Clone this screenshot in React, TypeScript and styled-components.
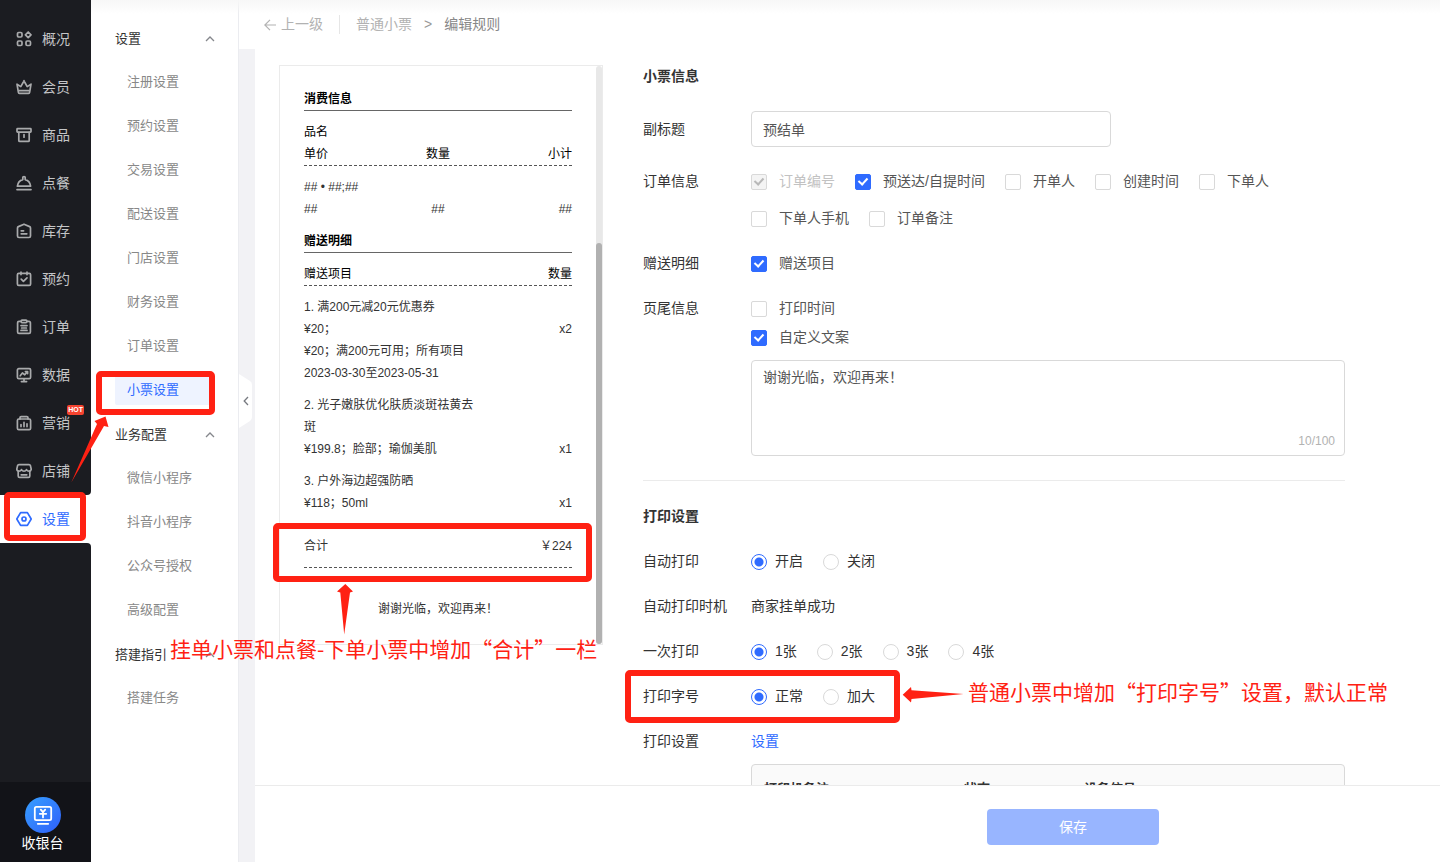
import React from "react";
import styled, { createGlobalStyle, css } from "styled-components";

const blue = "#2f6bff";
const red = "#ff2113";

const GlobalStyle = createGlobalStyle`
  *, *::before, *::after { box-sizing: border-box; }
  body {
    margin: 0;
    background: #fff;
    color: #333;
    font-family: "Liberation Sans", "Noto Sans CJK SC", sans-serif;
    font-size: 14px;
    line-height: 21px;
  }
  a { color: inherit; text-decoration: none; }
  button, input, textarea { font: inherit; color: inherit; }
`;

const Shell = styled.div`
  position: relative;
  display: flex;
  height: 100vh;
  overflow: hidden;
`;

/* ---------- dark navigation rail ---------- */

const Rail = styled.nav`
  display: flex;
  flex-direction: column;
  flex: none;
  width: 91px;
`;

const RailGroup = styled.div`
  padding-top: 15px;
  background: #1b1c21;
  border-bottom-right-radius: 4px;
`;

const RailFill = styled.div`
  flex: 1;
  background: #1b1c21;
  border-top-right-radius: 4px;
`;

const RailLink = styled.a<{ $active?: boolean }>`
  display: flex;
  align-items: center;
  gap: 10px;
  height: 48px;
  padding-left: 16px;
  color: ${(p) => (p.$active ? blue : "#c4c5c7")};
  background: ${(p) => (p.$active ? "#fff" : "transparent")};
`;

const RailIcon = styled.svg<{ $active?: boolean }>`
  width: 16px;
  height: 16px;
  flex: none;
  fill: none;
  stroke: ${(p) => (p.$active ? blue : "#a9aaac")};
  stroke-width: 1.7;
  stroke-linecap: round;
  stroke-linejoin: round;
`;

const RailText = styled.span`
  position: relative;
`;

const HotBadge = styled.span`
  position: absolute;
  top: -8px;
  right: -14px;
  padding: 0 1px;
  border-radius: 2px;
  background: #f5432f;
  color: #fff;
  font: 700 7px/10px "Liberation Sans", sans-serif;
`;

const Cashier = styled.a`
  display: flex;
  flex-direction: column;
  align-items: center;
  height: 80px;
  padding: 15px 6px 0 0;
  background: #121318;
  color: #fff;
`;

/* ---------- second level menu ---------- */

const SubMenu = styled.nav`
  flex: none;
  width: 148px;
  padding: 16px 23px 0 24px;
  border-right: 1px solid #ebecf0;
  font-size: 13px;
`;

const SubHead = styled.button`
  display: flex;
  align-items: center;
  justify-content: space-between;
  width: 100%;
  height: 44px;
  padding: 0;
  border: 0;
  background: none;
  color: #333;
  text-align: left;
`;

const Caret = styled.svg`
  width: 10px;
  height: 10px;
  fill: none;
  stroke: #85878c;
  stroke-width: 1.3;
`;

const SubLink = styled.a<{ $active?: boolean }>`
  display: block;
  height: 30px;
  margin: 7px 0 14px;
  padding-left: 12px;
  border-radius: 2px;
  line-height: 30px;
  color: ${(p) => (p.$active ? blue : "#888")};
  background: ${(p) => (p.$active ? "#eef3ff" : "transparent")};
  &:last-child { margin-bottom: 7px; }
`;

/* ---------- page area ---------- */

const Page = styled.div`
  display: flex;
  flex-direction: column;
  flex: 1;
  min-width: 0;
`;

const TopShade = styled.div`
  position: absolute;
  top: 0;
  left: 91px;
  right: 0;
  height: 14px;
  background: linear-gradient(#f7f7f7, rgba(255, 255, 255, 0));
`;

const Crumbs = styled.nav`
  display: flex;
  align-items: center;
  flex: none;
  height: 49px;
  padding-left: 25px;
  color: #b2b2b2;
`;

const BackLink = styled.a`
  display: flex;
  align-items: center;
  gap: 5px;
  height: 19px;
  padding-right: 16px;
  border-right: 1px solid #e6e6e6;
`;

const CrumbLink = styled.a`
  margin-left: 16px;
`;

const CrumbMark = styled.span`
  margin: 0 12px;
  color: #999;
`;

const CrumbHere = styled.span`
  color: #888;
`;

const Below = styled.div`
  display: flex;
  flex: 1;
  min-height: 0;
`;

const Gutter = styled.div`
  display: flex;
  align-items: center;
  flex: none;
  width: 16px;
  padding-bottom: 109px;
  background: #f2f2f5;
`;

const FoldButton = styled.button`
  width: 13px;
  height: 54px;
  padding: 0;
  border: 0;
  background: none;
  line-height: 0;
`;

const Work = styled.div`
  display: flex;
  flex-direction: column;
  flex: 1;
  min-width: 0;
`;

const Scroller = styled.main`
  display: flex;
  align-items: flex-start;
  gap: 40px;
  flex: 1;
  min-height: 0;
  overflow: hidden;
  padding: 16px 24px 0;
`;

const Footer = styled.footer`
  display: flex;
  align-items: center;
  justify-content: center;
  flex: none;
  height: 77px;
  padding: 6px 0 0 451px;
  border-top: 1px solid #ebebeb;
`;

const SaveButton = styled.button`
  width: 172px;
  height: 36px;
  border: 0;
  border-radius: 4px;
  background: #98b5ff;
  color: #fff;
`;

/* ---------- receipt preview ---------- */

const Receipt = styled.section`
  display: flex;
  flex: none;
  width: 324px;
  border: 1px solid #ebebeb;
  font-size: 12px;
  line-height: 22px;
`;

const Paper = styled.div`
  flex: 1;
  padding: 22px 24px 24px;
`;

const Track = styled.div`
  width: 6px;
  padding-top: 177px;
  border-radius: 3px;
  background: #e8e8e8;
`;

const Thumb = styled.div`
  height: 100%;
  border-radius: 3px;
  background: #b1b1b1;
`;

const PaperTitle = styled.h3`
  margin: 0 0 10px;
  border-bottom: 1px solid #666;
  color: #000;
  font-size: 12px;
  font-weight: 700;
`;

const dashed = css`
  border-bottom: 1px dashed #555;
`;

const PaperHead = styled.div`
  margin-bottom: 10px;
  color: #000;
  ${dashed}
`;

const PaperItem = styled.div`
  margin-bottom: 10px;
`;

const PaperRow = styled.div`
  display: flex;
  justify-content: space-between;
`;

const ItemName = styled.div`
  width: 65%;
`;

const Total = styled(PaperRow)`
  margin-top: 21px;
  padding-bottom: 10px;
  ${dashed}
`;

const Thanks = styled.p`
  margin: 30px 0 0;
  text-align: center;
`;

/* ---------- form ---------- */

const Form = styled.form`
  flex: 0 1 702px;
  min-width: 0;
`;

const SectionTitle = styled.h2`
  margin: 0 0 24px;
  font-size: 14px;
  font-weight: 700;
  line-height: 22px;
`;

const Row = styled.div<{ $center?: boolean }>`
  display: flex;
  align-items: ${(p) => (p.$center ? "center" : "flex-start")};
  margin-bottom: 24px;
`;

const Label = styled.label`
  flex: none;
  width: 108px;
`;

const GroupLabel = styled.span`
  flex: none;
  width: 108px;
`;

const Field = styled.div`
  flex: 1;
  min-width: 0;
`;

const Options = styled.div`
  display: flex;
  flex-wrap: wrap;
  gap: 16px 20px;
`;

const Stack = styled.div`
  display: flex;
  flex-direction: column;
  gap: 8px;
`;

const TextInput = styled.input`
  display: block;
  width: 360px;
  max-width: 100%;
  height: 36px;
  padding: 0 11px;
  border: 1px solid #d9d9d9;
  border-radius: 4px;
  background: #fff;
  color: #555;
`;

const Option = styled.label<{ $radio?: boolean; $disabled?: boolean }>`
  display: flex;
  align-items: center;
  gap: ${(p) => (p.$radio ? 8 : 12)}px;
  color: ${(p) => (p.$disabled ? "#c2c2c2" : p.$radio ? "#333" : "#555")};
`;

const Check = styled.input`
  appearance: none;
  position: relative;
  width: 16px;
  height: 16px;
  margin: 0;
  border: 1px solid #d9d9d9;
  border-radius: 2px;
  background: #fff;
  &:checked {
    border-color: ${blue};
    background: ${blue};
  }
  &:checked::after {
    content: "";
    position: absolute;
    left: 4px;
    top: 1px;
    width: 6px;
    height: 9px;
    border: solid #fff;
    border-width: 0 2px 2px 0;
    transform: rotate(42deg);
  }
  &:disabled {
    border-color: #d9d9d9;
    background: #f4f4f4;
  }
  &:disabled::after {
    border-color: #b8b8b8;
  }
`;

const Radio = styled.input`
  appearance: none;
  width: 16px;
  height: 16px;
  margin: 0;
  border: 1px solid #d9d9d9;
  border-radius: 50%;
  background: #fff;
  &:checked {
    border-color: ${blue};
    background: radial-gradient(circle, ${blue} 4px, #fff 5px);
  }
`;

/* The text box belongs to the row above it, so it sits half a row gap closer. */
const TextBox = styled.div`
  position: relative;
  margin: -12px 0 24px 108px;
`;

const TextArea = styled.textarea`
  display: block;
  width: 100%;
  height: 96px;
  padding: 6px 11px;
  border: 1px solid #d9d9d9;
  border-radius: 4px;
  color: #555;
  resize: none;
`;

const Counter = styled.span`
  position: absolute;
  right: 10px;
  bottom: 4px;
  color: #b2b2b2;
  font-size: 12px;
`;

const Divider = styled.hr`
  height: 1px;
  margin: 0 0 24px;
  border: 0;
  background: #ebebeb;
`;

const TextLink = styled.a`
  color: ${blue};
`;

const TableFrame = styled.div`
  margin: -12px 0 0 108px;
  border: 1px solid #d9d9d9;
  border-radius: 4px;
  background: #fafafa;
  overflow: hidden;
`;

const Table = styled.table`
  width: 100%;
  border-collapse: collapse;
  table-layout: fixed;
  font-size: 13px;
`;

const Th = styled.th<{ $width?: number }>`
  width: ${(p) => (p.$width ? `${p.$width}px` : "auto")};
  height: 46px;
  padding: 0 12px;
  text-align: left;
`;

/* ---------- red mark-up on top of the page ---------- */

const Frame = styled.div<{ $x: number; $y: number; $w: number; $h: number }>`
  position: absolute;
  left: ${(p) => p.$x}px;
  top: ${(p) => p.$y}px;
  width: ${(p) => p.$w}px;
  height: ${(p) => p.$h}px;
  border: 6px solid ${red};
  border-radius: 5px;
  pointer-events: none;
`;

const Arrows = styled.svg`
  position: absolute;
  left: 0;
  top: 0;
  width: 1000px;
  height: 720px;
  fill: ${red};
  pointer-events: none;
`;

const Note = styled.p<{ $x: number; $y: number }>`
  position: absolute;
  left: ${(p) => p.$x}px;
  top: ${(p) => p.$y}px;
  margin: 0;
  color: ${red};
  font: 400 21px/30px "Noto Sans CJK SC", sans-serif;
  white-space: nowrap;
  pointer-events: none;
`;

const icons: Record<string, React.ReactNode> = {
  概况: (
    <>
      <rect x="1.5" y="1.5" width="4.5" height="4.5" rx="1.2" />
      <path d="M12.2 1 15 3.8 12.2 6.6 9.4 3.8z" />
      <rect x="1.5" y="10" width="4.5" height="4.5" rx="1.2" />
      <rect x="10" y="10" width="4.5" height="4.5" rx="1.2" />
    </>
  ),
  会员: (
    <>
      <path d="M1 5.2 2.4 13.4q.1 1 1 1h9.200q.9 0 1-1L15 5.200 11.200 7.600 8.600 3H7.400L4.800 7.600z" />
      <path d="M3 11.600h10M8 1.600v.6" />
    </>
  ),
  商品: (
    <>
      <rect x="1" y="1.6" width="14" height="3.6" rx=".6" />
      <path d="M2.800 5.400v8q0 1 1 1h8.400q1 0 1-1v-8M8 7.600v2.600" />
    </>
  ),
  点餐: (
    <>
      <path d="M1.4 11.2Q2 6 6.8 4.6V2.600q0-1 1.200-1t1.200 1v2Q14 6 14.600 11.200z" />
      <path d="M1 14.600h14" />
    </>
  ),
  库存: (
    <>
      <path d="M8 1.200 13.600 3.600q.9.4.9 1.400v8q0 1.500-1.500 1.500H3q-1.500 0-1.500-1.500V5q0-1 .9-1.400z" />
      <path d="M5.200 7.800h2.400M5.200 10.800h5.600" />
    </>
  ),
  预约: (
    <>
      <rect x="1.4" y="2.4" width="13.200" height="12" rx="1.4" />
      <path d="M5 1.200v2.400M11 1.200v2.400M5.200 8.200l2.200 2.200 3.600-3.600" />
    </>
  ),
  订单: (
    <>
      <path d="M5 2.400H3q-1.400 0-1.400 1.400v9.200q0 1.400 1.400 1.400h10q1.400 0 1.400-1.400V3.800q0-1.400-1.400-1.400h-2" />
      <rect x="5.200" y="1.200" width="5.600" height="2.400" rx=".8" />
      <path d="M5 6.600h6M5.600 9h4.800M5 11.400h6" />
    </>
  ),
  数据: (
    <>
      <rect x="1.400" y="1.600" width="13.200" height="10" rx="1.400" />
      <path d="M4.200 8.800 6.400 6l2.400 1.800 2.600-3M9.400 4.600h2.200v2M8 11.800v2.400M5.400 14.600h5.200" />
    </>
  ),
  营销: (
    <>
      <path d="M4 4V2.800q0-1.200 1.200-1.200h5.600Q12 1.600 12 2.800V4" />
      <rect x="1.400" y="4" width="13.200" height="10.600" rx="1.400" />
      <path d="M5 9.600v2M8 7.400v4.200M11 8.800v2.800" />
    </>
  ),
  店铺: (
    <>
      <path d="M3 1.600h10q1.100 0 1.400 1L15.200 6q0 2.200-2.200 2.200-1.600 0-2.500-1.600Q9.600 8.200 8 8.200 6.400 8.200 5.500 6.600 4.600 8.200 3 8.200.8 8.200.8 6l.8-3.400q.3-1 1.400-1z" />
      <path d="M2.200 8.400v4.600q0 1.400 1.400 1.400h8.800q1.400 0 1.400-1.400V8.400M5.200 11.800h5.600" />
    </>
  ),
  设置: (
    <>
      <path d="M4.600 1.600h6.800L15.200 8l-3.800 6.400H4.600L.8 8z" />
      <circle cx="8" cy="8" r="2" />
    </>
  ),
};

const railItems = ["概况", "会员", "商品", "点餐", "库存", "预约", "订单", "数据", "营销", "店铺"];

const subMenu = [
  {
    title: "设置",
    items: ["注册设置", "预约设置", "交易设置", "配送设置", "门店设置", "财务设置", "订单设置", "小票设置"],
  },
  { title: "业务配置", items: ["微信小程序", "抖音小程序", "公众号授权", "高级配置"] },
  { title: "搭建指引", items: ["搭建任务"] },
];

const gifts = [
  {
    name: "1. 满200元减20元优惠券",
    detail: "¥20；",
    count: "x2",
    extra: ["¥20；满200元可用；所有项目", "2023-03-30至2023-05-31"],
  },
  { name: "2. 光子嫩肤优化肤质淡斑祛黄去斑", detail: "¥199.8；脸部；瑜伽美肌", count: "x1", extra: [] },
  { name: "3. 户外海边超强防晒", detail: "¥118；50ml", count: "x1", extra: [] },
];

function RailEntry({ name, active }: { name: string; active?: boolean }) {
  return (
    <RailLink href="#" $active={active}>
      <RailIcon viewBox="0 0 16 16" $active={active} aria-hidden="true">
        {icons[name]}
      </RailIcon>
      <RailText>
        {name}
        {name === "营销" && <HotBadge>HOT</HotBadge>}
      </RailText>
    </RailLink>
  );
}

function CheckOption({ text, checked, disabled }: { text: string; checked?: boolean; disabled?: boolean }) {
  return (
    <Option $disabled={disabled}>
      <Check type="checkbox" defaultChecked={checked} disabled={disabled} />
      {text}
    </Option>
  );
}

function RadioRow({ label, name, options }: { label: string; name: string; options: string[] }) {
  return (
    <Row role="radiogroup" aria-label={label}>
      <GroupLabel>{label}</GroupLabel>
      <Options>
        {options.map((text, i) => (
          <Option key={text} $radio>
            <Radio type="radio" name={name} defaultChecked={i === 0} />
            {text}
          </Option>
        ))}
      </Options>
    </Row>
  );
}

function ReceiptPreview() {
  return (
    <Receipt>
      <Paper>
        <PaperTitle>消费信息</PaperTitle>
        <PaperHead>
          <div>品名</div>
          <PaperRow>
            <span>单价</span>
            <span>数量</span>
            <span>小计</span>
          </PaperRow>
        </PaperHead>
        <PaperItem>
          <div>## • ##;##</div>
          <PaperRow>
            <span>##</span>
            <span>##</span>
            <span>##</span>
          </PaperRow>
        </PaperItem>
        <PaperTitle>赠送明细</PaperTitle>
        <PaperHead>
          <PaperRow>
            <span>赠送项目</span>
            <span>数量</span>
          </PaperRow>
        </PaperHead>
        {gifts.map((gift) => (
          <PaperItem key={gift.name}>
            <ItemName>{gift.name}</ItemName>
            <PaperRow>
              <span>{gift.detail}</span>
              <span>{gift.count}</span>
            </PaperRow>
            {gift.extra.map((line) => (
              <div key={line}>{line}</div>
            ))}
          </PaperItem>
        ))}
        <Total>
          <span>合计</span>
          <span>￥224</span>
        </Total>
        <Thanks>谢谢光临，欢迎再来！</Thanks>
      </Paper>
      <Track>
        <Thumb />
      </Track>
    </Receipt>
  );
}

function RuleForm() {
  return (
    <Form>
      <SectionTitle>小票信息</SectionTitle>
      <Row $center>
        <Label htmlFor="subtitle">副标题</Label>
        <Field>
          <TextInput id="subtitle" defaultValue="预结单" />
        </Field>
      </Row>
      <Row role="group" aria-label="订单信息">
        <GroupLabel>订单信息</GroupLabel>
        <Field>
          <Options>
            <CheckOption text="订单编号" checked disabled />
            <CheckOption text="预送达/自提时间" checked />
            <CheckOption text="开单人" />
            <CheckOption text="创建时间" />
            <CheckOption text="下单人" />
            <CheckOption text="下单人手机" />
            <CheckOption text="订单备注" />
          </Options>
        </Field>
      </Row>
      <Row role="group" aria-label="赠送明细">
        <GroupLabel>赠送明细</GroupLabel>
        <CheckOption text="赠送项目" checked />
      </Row>
      <Row role="group" aria-label="页尾信息">
        <GroupLabel>页尾信息</GroupLabel>
        <Stack>
          <CheckOption text="打印时间" />
          <CheckOption text="自定义文案" checked />
        </Stack>
      </Row>
      <TextBox>
        <TextArea aria-label="自定义文案" defaultValue="谢谢光临，欢迎再来！" />
        <Counter>10/100</Counter>
      </TextBox>
      <Divider />
      <SectionTitle>打印设置</SectionTitle>
      <RadioRow label="自动打印" name="auto" options={["开启", "关闭"]} />
      <Row>
        <GroupLabel>自动打印时机</GroupLabel>
        <span>商家挂单成功</span>
      </Row>
      <RadioRow label="一次打印" name="copies" options={["1张", "2张", "3张", "4张"]} />
      <RadioRow label="打印字号" name="size" options={["正常", "加大"]} />
      <Row>
        <GroupLabel>打印设置</GroupLabel>
        <TextLink href="#">设置</TextLink>
      </Row>
      <TableFrame>
        <Table>
          <thead>
            <tr>
              <Th $width={200}>打印机备注</Th>
              <Th $width={120}>状态</Th>
              <Th>设备信号</Th>
            </tr>
          </thead>
        </Table>
      </TableFrame>
    </Form>
  );
}

export default function App() {
  return (
    <Shell>
      <GlobalStyle />
      <Rail>
        <RailGroup>
          {railItems.map((name) => (
            <RailEntry key={name} name={name} />
          ))}
        </RailGroup>
        <RailEntry name="设置" active />
        <RailFill />
        <Cashier href="#">
          <svg width="36" height="36" viewBox="0 0 36 36" fill="none" stroke="#fff" strokeWidth="1.8" strokeLinecap="round" strokeLinejoin="round" aria-hidden="true">
            <defs>
              <linearGradient id="cash" x1="0" y1="0" x2="1" y2="1">
                <stop offset="0" stopColor="#36a0ff" />
                <stop offset="1" stopColor="#2f5ffa" />
              </linearGradient>
            </defs>
            <circle cx="18" cy="18" r="18" fill="url(#cash)" stroke="none" />
            <rect x="9.8" y="9.8" width="16.4" height="13.4" rx="1.6" />
            <path d="M12.8 26.8h10.4M15.800 12.600 18 15.200l2.200-2.600M18 15.200v5.200M14.800 16.800h6.400" />
          </svg>
          收银台
        </Cashier>
      </Rail>

      <SubMenu>
        {subMenu.map((group) => (
          <div key={group.title}>
            <SubHead type="button">
              {group.title}
              <Caret viewBox="0 0 10 10" aria-hidden="true">
                <path d="M1 8l4-4 4 4" />
              </Caret>
            </SubHead>
            {group.items.map((item) => (
              <SubLink key={item} href="#" $active={item === "小票设置"}>
                {item}
              </SubLink>
            ))}
          </div>
        ))}
      </SubMenu>

      <Page>
        <Crumbs>
          <BackLink href="#">
            <svg width="12" height="12" viewBox="0 0 12 12" fill="none" stroke="#b2b2b2" strokeWidth="1.2" aria-hidden="true">
              <path d="M12 6H1M6 .8.8 6 6 11.2" />
            </svg>
            上一级
          </BackLink>
          <CrumbLink href="#">普通小票</CrumbLink>
          <CrumbMark>&gt;</CrumbMark>
          <CrumbHere>编辑规则</CrumbHere>
        </Crumbs>
        <Below>
          <Gutter>
            <FoldButton type="button" aria-label="收起菜单">
              <svg width="13" height="54" viewBox="0 0 13 54" fill="none" aria-hidden="true">
                <path d="M0 0 11 7q2 1.2 2 4v32q0 2.8-2 4L0 54z" fill="#fff" />
                <path d="M9 23 5.2 27 9 31" stroke="#777a80" strokeWidth="1.3" />
              </svg>
            </FoldButton>
          </Gutter>
          <Work>
            <Scroller>
              <ReceiptPreview />
              <RuleForm />
            </Scroller>
            <Footer>
              <SaveButton type="button">保存</SaveButton>
            </Footer>
          </Work>
        </Below>
      </Page>
      <TopShade />

      <Frame $x={96} $y={371} $w={119} $h={44} />
      <Frame $x={4} $y={492} $w={82} $h={49} />
      <Frame $x={273} $y={523} $w={319} $h={59} />
      <Frame $x={625} $y={670} $w={275} $h={53} />
      <Arrows viewBox="0 0 1000 720" aria-hidden="true">
        <path d="M105.5 416.5 108.5 427 104 426 71.3 482.5 97 424 94.5 421z" />
        <path d="M345.3 584 353 591.5 350 592.5 344.2 634.5 340.3 592.5 337 591.5z" />
        <path d="M902.7 694.7 911 687 911.5 690.3 963.5 694 911.5 699 911 702.5z" />
      </Arrows>
      <Note $x={170} $y={633}>挂单小票和点餐-下单小票中增加“合计”一栏</Note>
      <Note $x={968} $y={676}>普通小票中增加“打印字号”设置，默认正常</Note>
    </Shell>
  );
}
